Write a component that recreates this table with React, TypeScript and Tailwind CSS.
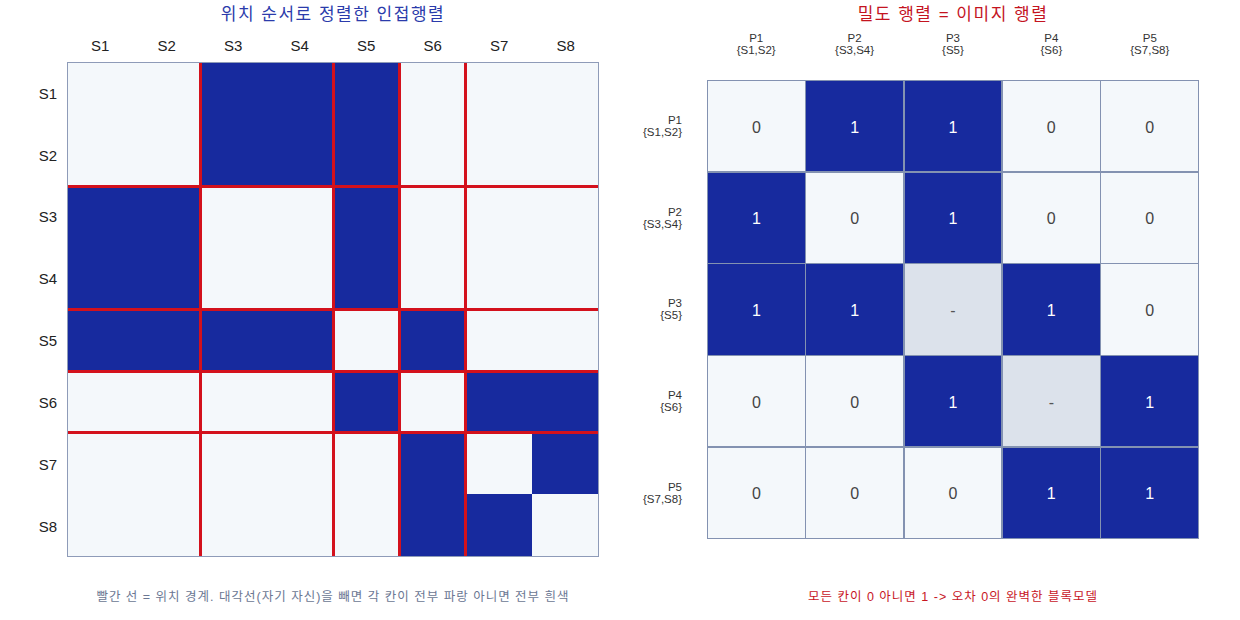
import React from "react";

const F = { fontFamily: '"Liberation Sans", "Noto Sans CJK KR", sans-serif' };

const S = ["S1", "S2", "S3", "S4", "S5", "S6", "S7", "S8"];
const adj: number[][] = [
  [0, 0, 1, 1, 1, 0, 0, 0],
  [0, 0, 1, 1, 1, 0, 0, 0],
  [1, 1, 0, 0, 1, 0, 0, 0],
  [1, 1, 0, 0, 1, 0, 0, 0],
  [1, 1, 1, 1, 0, 1, 0, 0],
  [0, 0, 0, 0, 1, 0, 1, 1],
  [0, 0, 0, 0, 0, 1, 0, 1],
  [0, 0, 0, 0, 0, 1, 1, 0],
];

const P = [
  ["P1", "{S1,S2}"],
  ["P2", "{S3,S4}"],
  ["P3", "{S5}"],
  ["P4", "{S6}"],
  ["P5", "{S7,S8}"],
];
const dens: string[][] = [
  ["0", "1", "1", "0", "0"],
  ["1", "0", "1", "0", "0"],
  ["1", "1", "-", "1", "0"],
  ["0", "0", "1", "-", "1"],
  ["0", "0", "0", "1", "1"],
];

function LeftPanel() {
  return (
    <div className="flex w-[620px]">
      <div className="w-[67px] flex flex-col">
        <div className="h-[62px]" />
        <div className="h-[495px] grid grid-rows-8">
          {S.map((s) => (
            <div key={s} className="flex items-center justify-end pr-[10px] pt-[2px] text-[15px] text-[#222]">
              {s}
            </div>
          ))}
        </div>
      </div>
      <div className="w-[532px] flex flex-col">
        <div className="h-[30px] flex items-center justify-center text-[17px] tracking-[1.5px] text-[#2b3bab]">
          위치 순서로 정렬한 인접행렬
        </div>
        <div className="h-[32px] grid grid-cols-8 items-center">
          {S.map((s) => (
            <div key={s} className="text-center text-[15px] text-[#222]">
              {s}
            </div>
          ))}
        </div>
        <div className="relative h-[495px] border border-[#8e9bb8]">
          <div className="grid grid-cols-8 grid-rows-8 w-full h-full">
            {adj.map((row, i) =>
              row.map((v, j) => (
                <div key={i + "-" + j} className={v ? "bg-[#172a9e]" : "bg-[#f4f8fb]"} />
              ))
            )}
          </div>
          <div className="absolute top-0 bottom-0 left-[25%] w-[3px] -ml-[1.5px] bg-[#d3111c]" />
          <div className="absolute top-0 bottom-0 left-[50%] w-[3px] -ml-[1.5px] bg-[#d3111c]" />
          <div className="absolute top-0 bottom-0 left-[62.5%] w-[3px] -ml-[1.5px] bg-[#d3111c]" />
          <div className="absolute top-0 bottom-0 left-[75%] w-[3px] -ml-[1.5px] bg-[#d3111c]" />
          <div className="absolute left-0 right-0 top-[25%] h-[3px] -mt-[1.5px] bg-[#d3111c]" />
          <div className="absolute left-0 right-0 top-[50%] h-[3px] -mt-[1.5px] bg-[#d3111c]" />
          <div className="absolute left-0 right-0 top-[62.5%] h-[3px] -mt-[1.5px] bg-[#d3111c]" />
          <div className="absolute left-0 right-0 top-[75%] h-[3px] -mt-[1.5px] bg-[#d3111c]" />
        </div>
        <div className="pt-[32px] text-center text-[12.5px] tracking-[1px] leading-[16px] text-[#6b7793] whitespace-nowrap">
          빨간 선 = 위치 경계. 대각선(자기 자신)을 빼면 각 칸이 전부 파랑 아니면 전부 흰색
        </div>
      </div>
    </div>
  );
}

function RightPanel() {
  return (
    <div className="flex w-[620px]">
      <div className="w-[87px] flex flex-col">
        <div className="h-[80px]" />
        <div className="h-[459px] grid grid-rows-5">
          {P.map(([a, b]) => (
            <div key={a} className="flex flex-col items-end justify-center pr-[25px] text-[11.5px] leading-[12px] text-[#333]">
              <div>{a}</div>
              <div>{b}</div>
            </div>
          ))}
        </div>
      </div>
      <div className="w-[492px] flex flex-col">
        <div className="h-[30px] flex items-center justify-center text-[17px] tracking-[1.5px] text-[#c4141f]">
          밀도 행렬 = 이미지 행렬
        </div>
        <div className="h-[50px] pt-[2px] grid grid-cols-5 items-start">
          {P.map(([a, b]) => (
            <div key={a} className="flex flex-col items-center text-[11.5px] leading-[12px] text-[#333]">
              <div>{a}</div>
              <div>{b}</div>
            </div>
          ))}
        </div>
        <div className="h-[459px] grid grid-cols-5 grid-rows-5 gap-[1.5px] p-[1px] bg-[#8392b1]">
          {dens.map((row, i) =>
            row.map((v, j) => {
              const cls =
                v === "1"
                  ? "bg-[#172a9e] text-white"
                  : v === "-"
                  ? "bg-[#dce2eb] text-[#555]"
                  : "bg-[#f4f8fb] text-[#444]";
              return (
                <div key={i + "-" + j} className={"flex items-center justify-center pt-[3px] text-[16px] " + cls}>
                  {v}
                </div>
              );
            })
          )}
        </div>
        <div className="pt-[50px] text-center text-[12.5px] tracking-[1px] leading-[16px] text-[#c8161f] whitespace-nowrap">
          모든 칸이 0 아니면 1 -&gt; 오차 0의 완벽한 블록모델
        </div>
      </div>
    </div>
  );
}

export default function App() {
  return (
    <div className="w-[1240px] h-[620px] bg-white flex overflow-hidden" style={F}>
      <LeftPanel />
      <RightPanel />
    </div>
  );
}
